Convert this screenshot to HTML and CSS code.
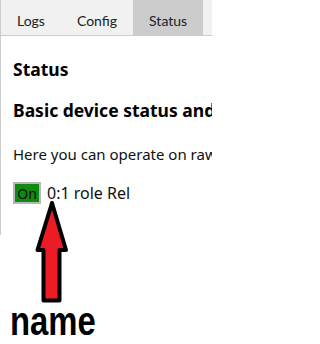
FILE: index.html
```html
<!DOCTYPE html>
<html>
<head>
<meta charset="utf-8">
<link rel="stylesheet" href="styles.css">
</head>
<body>
<div class="page">
  <div class="tabs">
    <button class="tab">Logs</button>
    <button class="tab">Config</button>
    <button class="tab active">Status</button>
  </div>
  <div class="tabcontent">
    <h3 class="title">Status</h3>
    <h3 class="subtitle">Basic device status and control</h3>
    <p class="intro">Here you can operate on raw relays and inputs.</p>
    <div class="row">
      <button class="on">On</button>
      <span class="label">0:1 role Rel</span>
    </div>
  </div>
  <div class="annotation">
    <svg class="arrow" width="42" height="112" viewBox="30 196 42 112">
      <polygon points="52,203 37.5,250 43.5,250 43.5,300.5 59.5,300.5 59.5,250 66,250" fill="#ed1c24" stroke="#000" stroke-width="4" stroke-linejoin="round"/>
    </svg>
    <div class="note">name</div>
  </div>
</div>
</body>
</html>
```
FILE: styles.css
```css
html, body {
  margin: 0;
  padding: 0;
  background: #fff;
  font-family: "Noto Sans", "Open Sans", sans-serif;
  color: #111;
}

.page {
  position: relative;
  width: 212px;
  height: 344px;
  overflow: hidden;
}

.tabs {
  display: flex;
  background: #f1f1f1;
  border-left: 1px solid #ccc;
  border-bottom: 1px solid #ccc;
  height: 35px;
  overflow: hidden;
}

.tab {
  flex: none;
  border: none;
  background: transparent;
  font-family: Lato, "Noto Sans", sans-serif;
  font-size: 14px;
  color: #222;
  padding: 6px 16px 0;
  line-height: 29px;
  height: 35px;
  margin: 0;
  white-space: nowrap;
}

.tab.active {
  background: #ccc;
}

.tabcontent {
  border-left: 1px solid #ccc;
  padding: 21px 0 0 12px;
  height: 178px;
  overflow: hidden;
  white-space: nowrap;
}

.title, .subtitle {
  margin: 0;
  font-size: 17.5px;
  line-height: 24px;
  font-weight: bold;
  color: #000;
  overflow: hidden;
}

.subtitle {
  margin-top: 17px;
}

.intro {
  margin: 22px 0 0;
  font-size: 15px;
  line-height: 20px;
  overflow: hidden;
}

.row {
  margin-top: 18px;
  display: flex;
  align-items: center;
  gap: 6px;
}

.on {
  background: #118811;
  border: 2px solid #b8b8b8;
  color: #111;
  font-family: inherit;
  font-size: 14px;
  width: 28px;
  height: 22px;
  padding: 0;
  margin: 0;
}

.label {
  font-size: 16px;
  line-height: 22px;
}

.annotation {
  position: absolute;
  left: 0;
  top: 196px;
}

.arrow {
  position: absolute;
  left: 30px;
  top: 0;
}

.note {
  position: absolute;
  left: 10px;
  top: 105px;
  font-family: "Liberation Sans", Arial, sans-serif;
  font-weight: bold;
  font-size: 40px;
  line-height: 40px;
  color: #000;
  transform: scaleX(0.82);
  transform-origin: left top;
  white-space: nowrap;
}
```
